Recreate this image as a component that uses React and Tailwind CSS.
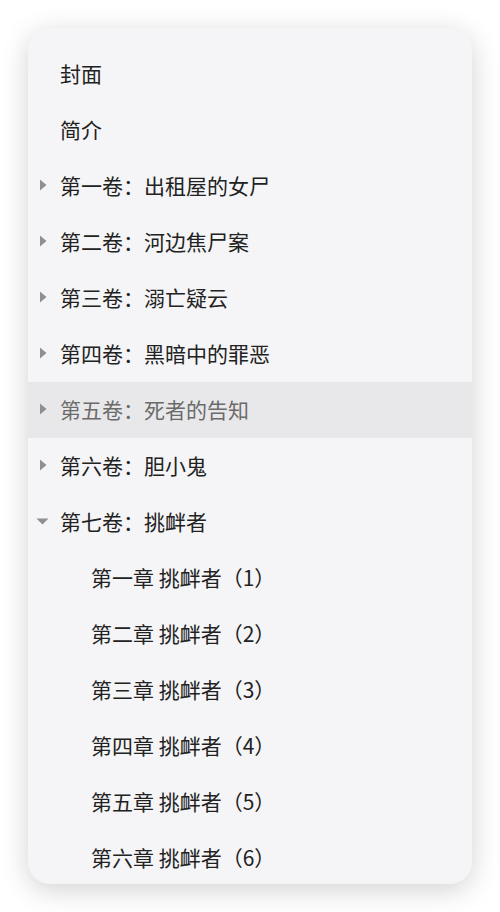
const volumes = [
  { title: "第一卷：出租屋的女尸" },
  { title: "第二卷：河边焦尸案" },
  { title: "第三卷：溺亡疑云" },
  { title: "第四卷：黑暗中的罪恶" },
  { title: "第五卷：死者的告知", active: true },
  { title: "第六卷：胆小鬼" },
  {
    title: "第七卷：挑衅者",
    open: true,
    chapters: [
      "第一章 挑衅者 （1）",
      "第二章 挑衅者 （2）",
      "第三章 挑衅者 （3）",
      "第四章 挑衅者 （4）",
      "第五章 挑衅者 （5）",
      "第六章 挑衅者 （6）",
    ],
  },
];

const Caret = ({ open }) =>
  open ? (
    <svg width="13" height="7" viewBox="0 0 13 7" className="shrink-0 mt-[-2px]">
      <path d="M0.5 0.5h12L6.5 6.5z" fill="#8e8e93" />
    </svg>
  ) : (
    <svg width="8" height="12" viewBox="0 0 8 12" className="shrink-0 mt-[-3px]">
      <path d="M1 0.5v11L7.5 6z" fill="#8e8e93" />
    </svg>
  );

const App = () => {
  return (
    <div
      className="w-[500px] h-[912px] bg-white p-[28px]"
      style={{ fontFamily: '"Noto Sans CJK SC", "Noto Sans", sans-serif' }}
    >
      <div className="h-[856px] rounded-[22px] bg-[#f5f5f7] shadow-[0_6px_28px_rgba(0,0,0,0.18)] overflow-hidden pt-[18px]">
        <div className="h-14 flex items-center pl-[32px] text-[21px] text-[#222]">封面</div>
        <div className="h-14 flex items-center pl-[32px] text-[21px] text-[#222]">简介</div>
        {volumes.map((v) => (
          <div key={v.title}>
            <div
              className={
                "h-14 flex items-center text-[21px] " +
                (v.active ? "bg-[#e8e8ea] text-[#6b6b6b]" : "text-[#222]")
              }
            >
              <div className="w-[29px] mr-[3px] flex justify-center">
                <Caret open={v.open} />
              </div>
              <span>{v.title}</span>
            </div>
            {v.open &&
              v.chapters.map((c) => (
                <div key={c} className="h-14 flex items-center pl-[63px] text-[21px] text-[#222]">
                  {c.replace(" （", "（")}
                </div>
              ))}
          </div>
        ))}
      </div>
    </div>
  );
};

export default App;
